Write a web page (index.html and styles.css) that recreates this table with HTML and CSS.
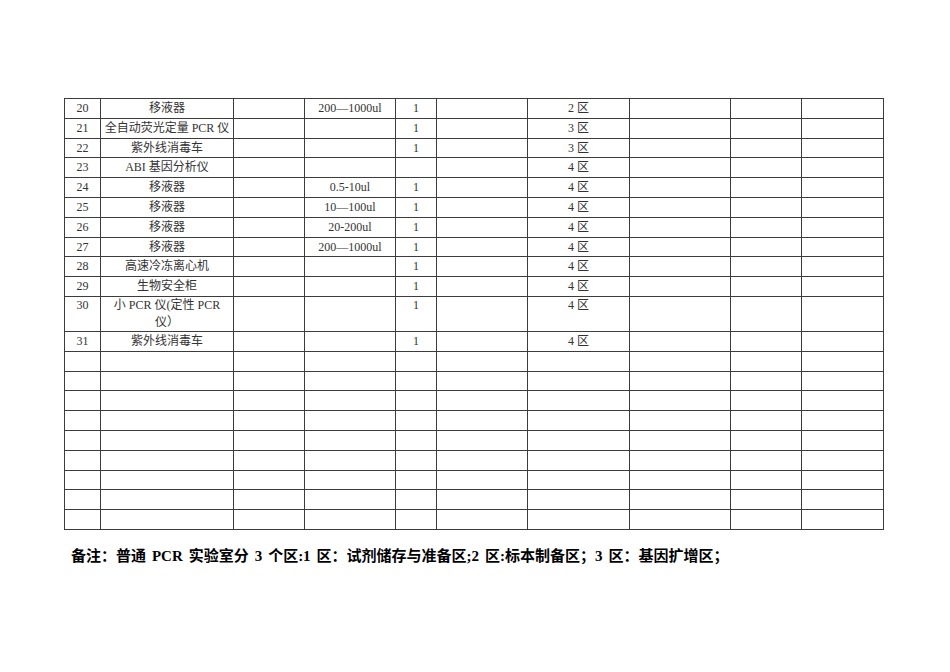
FILE: index.html
```html
<!DOCTYPE html>
<html lang="zh-CN">
<head>
<meta charset="utf-8">
<title>设备清单</title>
<link rel="stylesheet" href="styles.css">
</head>
<body>
<div class="page">
<table class="grid">
<colgroup>
<col class="c1"><col class="c2"><col class="c3"><col class="c4"><col class="c5"><col class="c6"><col class="c7"><col class="c8"><col class="c9"><col class="c10">
</colgroup>
<tbody>
<tr><td>20</td><td>移液器</td><td></td><td>200—1000ul</td><td>1</td><td></td><td>2 区</td><td></td><td></td><td></td></tr>
<tr><td>21</td><td>全自动荧光定量 PCR 仪</td><td></td><td></td><td>1</td><td></td><td>3 区</td><td></td><td></td><td></td></tr>
<tr><td>22</td><td>紫外线消毒车</td><td></td><td></td><td>1</td><td></td><td>3 区</td><td></td><td></td><td></td></tr>
<tr><td>23</td><td>ABI 基因分析仪</td><td></td><td></td><td></td><td></td><td>4 区</td><td></td><td></td><td></td></tr>
<tr><td>24</td><td>移液器</td><td></td><td>0.5-10ul</td><td>1</td><td></td><td>4 区</td><td></td><td></td><td></td></tr>
<tr><td>25</td><td>移液器</td><td></td><td>10—100ul</td><td>1</td><td></td><td>4 区</td><td></td><td></td><td></td></tr>
<tr><td>26</td><td>移液器</td><td></td><td>20-200ul</td><td>1</td><td></td><td>4 区</td><td></td><td></td><td></td></tr>
<tr><td>27</td><td>移液器</td><td></td><td>200—1000ul</td><td>1</td><td></td><td>4 区</td><td></td><td></td><td></td></tr>
<tr><td>28</td><td>高速冷冻离心机</td><td></td><td></td><td>1</td><td></td><td>4 区</td><td></td><td></td><td></td></tr>
<tr><td>29</td><td>生物安全柜</td><td></td><td></td><td>1</td><td></td><td>4 区</td><td></td><td></td><td></td></tr>
<tr class="tall"><td>30</td><td>小 PCR 仪(定性 PCR<br>仪）</td><td></td><td></td><td>1</td><td></td><td>4 区</td><td></td><td></td><td></td></tr>
<tr><td>31</td><td>紫外线消毒车</td><td></td><td></td><td>1</td><td></td><td>4 区</td><td></td><td></td><td></td></tr>
<tr><td></td><td></td><td></td><td></td><td></td><td></td><td></td><td></td><td></td><td></td></tr>
<tr><td></td><td></td><td></td><td></td><td></td><td></td><td></td><td></td><td></td><td></td></tr>
<tr><td></td><td></td><td></td><td></td><td></td><td></td><td></td><td></td><td></td><td></td></tr>
<tr><td></td><td></td><td></td><td></td><td></td><td></td><td></td><td></td><td></td><td></td></tr>
<tr><td></td><td></td><td></td><td></td><td></td><td></td><td></td><td></td><td></td><td></td></tr>
<tr><td></td><td></td><td></td><td></td><td></td><td></td><td></td><td></td><td></td><td></td></tr>
<tr><td></td><td></td><td></td><td></td><td></td><td></td><td></td><td></td><td></td><td></td></tr>
<tr><td></td><td></td><td></td><td></td><td></td><td></td><td></td><td></td><td></td><td></td></tr>
<tr><td></td><td></td><td></td><td></td><td></td><td></td><td></td><td></td><td></td><td></td></tr>
</tbody>
</table>
<p class="note">备注：普通 PCR 实验室分 3 个区:1 区：试剂储存与准备区;2 区:标本制备区；3 区：基因扩增区；</p>
</div>
</body>
</html>
```
FILE: styles.css
```css
html, body {
  margin: 0;
  padding: 0;
  background: #ffffff;
}
.page {
  padding: 98px 0 0 64px;
}
.grid {
  border-collapse: collapse;
  table-layout: fixed;
  width: 819px;
  font-family: "Liberation Serif", "Noto Sans CJK SC", serif;
  font-size: 12px;
  color: #333333;
}
.c1 { width: 36px; }
.c2 { width: 133px; }
.c3 { width: 71px; }
.c4 { width: 91px; }
.c5 { width: 41px; }
.c6 { width: 91px; }
.c7 { width: 102px; }
.c8 { width: 101px; }
.c9 { width: 71px; }
.c10 { width: 82px; }
.grid tr { height: 19.8px; }
.grid tr.tall { height: 35px; }
.grid td {
  border: 1px solid #3c3c3c;
  padding: 0;
  line-height: 18.8px;
  text-align: center;
  vertical-align: top;
  white-space: nowrap;
  overflow: hidden;
}
.grid tr.tall td {
  line-height: 17px;
}
.note {
  margin: 16px 0 0 0;
  padding-left: 7px;
  font-family: "Liberation Serif", "Noto Sans CJK SC", serif;
  font-weight: bold;
  font-size: 15px;
  line-height: 20px;
  word-spacing: 2.2px;
  color: #000;
}
```
